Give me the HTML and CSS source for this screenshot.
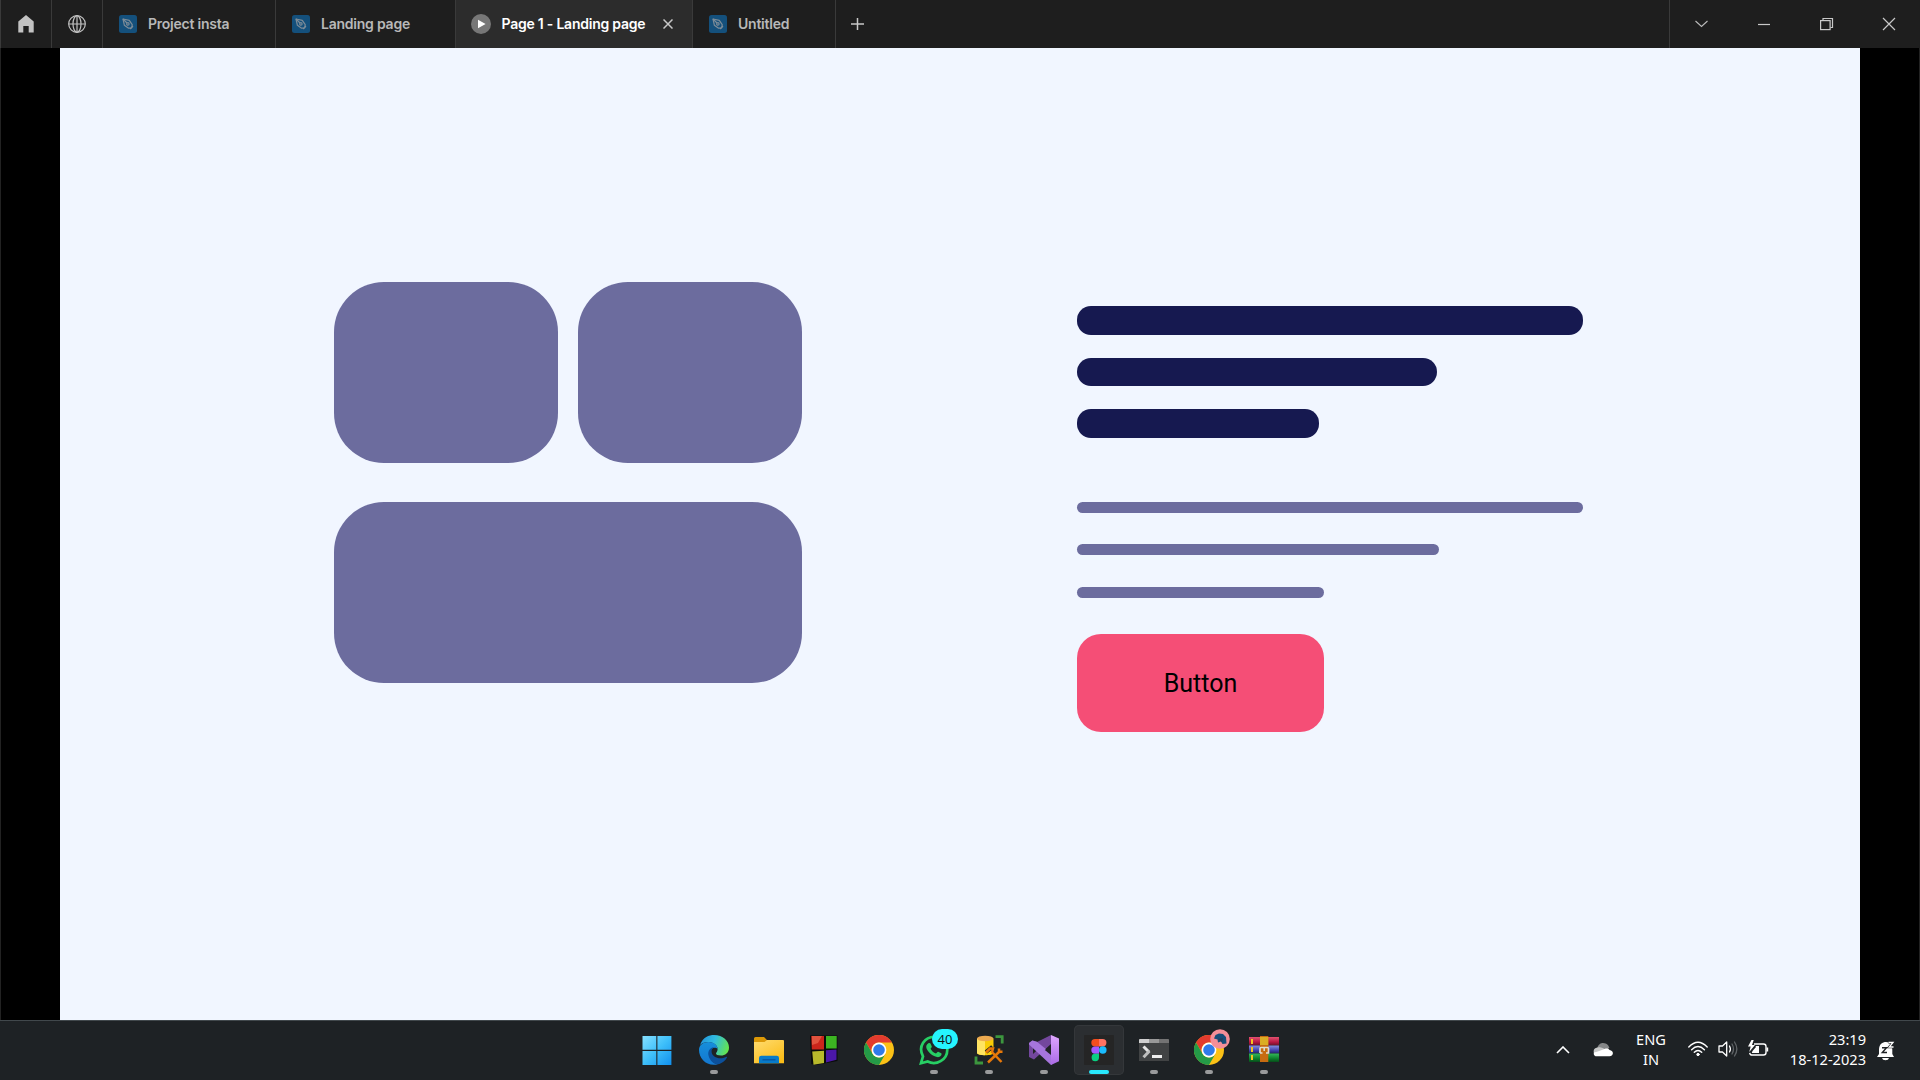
FILE: index.html
```html
<!DOCTYPE html>
<html lang="en">
<head>
<meta charset="utf-8">
<title>Page 1 - Landing page</title>
<link rel="stylesheet" href="styles.css">
</head>
<body>
<svg class="defs" width="0" height="0" aria-hidden="true">
  <defs>
    <symbol id="pen" viewBox="0 0 18 18">
      <rect width="18" height="18" rx="2.5" fill="#14507c"/>
      <g fill="none" stroke="#7d8c98" stroke-width="1.2" stroke-linejoin="round">
        <path d="M4 4L10.3 5.4L13.2 9.6L12.8 12.8L9.6 13.2L5.4 10.3Z"/>
        <path d="M4 4L8 8M11 14L14 11"/>
        <circle cx="8.9" cy="8.9" r="1.2"/>
      </g>
    </symbol>
    <symbol id="chrome" viewBox="0 0 30 30">
      <circle cx="15" cy="15" r="15" fill="#fbc116"/>
      <path d="M2 7.5A15 15 0 0 1 28 7.5H15A7.5 7.5 0 0 0 8.5 18.8Z" fill="#e33b2e"/>
      <path d="M2 7.5A15 15 0 0 0 15 30L21.5 18.7A7.5 7.5 0 0 1 8.5 18.7Z" fill="#249a47"/>
      <circle cx="15" cy="15" r="7.4" fill="#fff"/>
      <circle cx="15" cy="15" r="5.8" fill="#2f7bea"/>
    </symbol>
  </defs>
</svg>

<header class="titlebar">
  <div class="tool"><svg width="16" height="18" viewBox="0 0 16 18"><path d="M8 0L15.7 6.5V17.6H10.7V11H5.3V17.6H.3V6.5Z" fill="#c2c2c2"/></svg></div>
  <div class="tool"><svg width="18" height="18" viewBox="0 0 18 18" fill="none" stroke="#c2c2c2" stroke-width="1.2"><circle cx="9" cy="9" r="8.3"/><ellipse cx="9" cy="9" rx="4" ry="8.3"/><path d="M9 .7V17.3M.7 9H17.3"/></svg></div>
  <div class="tab tab-project"><svg width="18" height="18"><use href="#pen"/></svg><span>Project insta</span></div>
  <div class="tab tab-landing"><svg width="18" height="18"><use href="#pen"/></svg><span>Landing page</span></div>
  <div class="tab tab-active"><svg width="20" height="20" viewBox="0 0 20 20"><circle cx="10" cy="10" r="10" fill="#777"/><path d="M7 5.8L14.6 10L7 14.2Z" fill="#fff"/></svg><span>Page 1 - Landing page</span><svg class="close" width="10" height="10" viewBox="0 0 10 10"><path d="M.5 .5L9.5 9.5M9.5 .5L.5 9.5" stroke="#c8c8c8" stroke-width="1.5"/></svg></div>
  <div class="tab tab-untitled"><svg width="18" height="18"><use href="#pen"/></svg><span>Untitled</span></div>
  <div class="add"><svg width="13" height="12" viewBox="0 0 13 12"><path d="M0 6H13M6.5 0V12" stroke="#c8c8c8" stroke-width="1.5"/></svg></div>
  <div class="controls">
    <svg width="63" height="48" viewBox="0 0 63 48"><path d="M25.5 21L31.5 26.5L37.5 21" fill="none" stroke="#bbb" stroke-width="1.1"/></svg>
    <svg width="62" height="48" viewBox="0 0 62 48"><path d="M25 24.5H37" stroke="#c8c8c8" stroke-width="1.2"/></svg>
    <svg width="63" height="48" viewBox="0 0 63 48" fill="none" stroke="#c8c8c8" stroke-width="1.2"><path d="M28 20.5V18.5H37.5V27.5H35.5" /><rect x="25.6" y="20.6" width="9.5" height="9"/></svg>
    <svg width="62" height="48" viewBox="0 0 62 48"><path d="M25 18L37 30M37 18L25 30" stroke="#c8c8c8" stroke-width="1.2"/></svg>
  </div>
</header>

<main class="viewer">
  <div class="canvas">
    <section class="gallery">
      <div class="block"></div><div class="block"></div><div class="block wide"></div>
    </section>
    <section class="copy">
      <div class="heading"><div class="line long"></div><div class="line medium"></div><div class="line short"></div></div>
      <div class="body-text"><div class="line long"></div><div class="line medium"></div><div class="line short"></div></div>
      <button class="cta">Button</button>
    </section>
  </div>
</main>

<footer class="taskbar">
  <nav class="apps">
    <div class="app start"><svg width="30" height="30" viewBox="0 0 30 30"><defs><linearGradient id="win" x1="0" y1="0" x2="30" y2="30" gradientUnits="userSpaceOnUse"><stop stop-color="#8ae2ff"/><stop offset=".5" stop-color="#3fc0fa"/><stop offset="1" stop-color="#108fee"/></linearGradient></defs><path d="M.5 1H14.3V14.8H.5ZM15.4 1H29.4V14.8H15.4ZM.5 16H14.3V30H.5ZM15.4 16H29.4V30H15.4Z" fill="url(#win)"/></svg></div>
    <div class="app running"><svg width="30" height="30" viewBox="0 0 30 30"><defs><linearGradient id="edge1" x1="2" y1="5" x2="29" y2="15" gradientUnits="userSpaceOnUse"><stop stop-color="#2297dd"/><stop offset=".45" stop-color="#31bce0"/><stop offset="1" stop-color="#65e64c"/></linearGradient><linearGradient id="edge2" x1="0" y1="0" x2="0" y2="1"><stop stop-color="#168fdb"/><stop offset="1" stop-color="#1477cf"/></linearGradient></defs><path d="M1 10C4 2 10 0 15 0C24 0 30 6 30 12.5C30 18 26 20.5 22 20.5C18.5 20.5 17 19.5 17 18.5C17 17.5 18.6 17 18.6 14C18.6 10 14 7 9.5 7C6 7 3 8 1 10Z" fill="url(#edge1)"/><path d="M0 15C0 10 4 7 9.5 7C15 7 18.6 10.5 18.6 14C17 12 11.5 12 10.5 18C9.7 24 15 29 19 29.3C8 32 0 24 0 15Z" fill="url(#edge2)"/><path d="M15 12.2C10 12.7 8.8 17 9.4 20C10.7 26.5 16 29.5 19 29.3C23 28.5 26.5 25.5 28 22.5C28.3 21.8 27.5 21.6 27 22C20 25.5 13 21.5 12.6 17C12.4 14.5 13.5 13 15 12.2Z" fill="#0c509b"/></svg></div>
    <div class="app"><svg width="30" height="30" viewBox="0 0 30 30"><defs><linearGradient id="fold" x1="0" y1="0" x2=".7" y2="1"><stop stop-color="#ffdc70"/><stop offset="1" stop-color="#fbbd19"/></linearGradient></defs><path d="M0 3.5Q0 2 1.5 2H10L13 5H29V12H0Z" fill="#dc9907"/><path d="M0 7H10.5L13 5H29Q30 5 30 6V28.3H0Z" fill="url(#fold)"/><path d="M5 28.3V23Q5 20.7 7.3 20.7H22.7Q25 20.7 25 23V28.3Z" fill="#087bc9"/><path d="M8.5 24.8H21.5" stroke="#0750a0" stroke-width="1.2"/></svg></div>
    <div class="app"><svg width="30" height="30" viewBox="0 0 30 30"><path d="M1 .5H28.5V26L7 30L2.3 29Z" fill="#090b0b"/><path d="M2.2 1H15V14.5H2.8Z" fill="#cc251b"/><path d="M3 1H13L9 8L3 10Z" fill="#ec6b52" opacity=".65"/><path d="M17 1H27.7V13.5H17Z" fill="#3cb522"/><path d="M3.2 16.5L15 15.7V28L4.5 29.7Z" fill="#b8b92b"/><path d="M17 15.3L27.5 14.5V24.8L17 27.5Z" fill="#4b17a9"/></svg></div>
    <div class="app"><svg width="30" height="30"><use href="#chrome"/></svg></div>
    <div class="app running"><svg width="30" height="30" viewBox="0 0 30 30"><path d="M2 28.2L4 21.4C-1.5 11 6 1.8 15.3 1.8C23 1.8 28.3 8 28.3 14.7C28.3 25 17 31 8.7 26.5Z" fill="#202326" stroke="#27cf64" stroke-width="2.7"/><path d="M8.2 9.2C9.7 7.5 11.2 7.7 11.6 8.7L12.8 11.5C13 12.3 11.8 13.2 11.6 13.7C12.7 16 14.5 17.7 17 18.6C17.8 18 18.5 16.5 19.2 16.8L22.3 18.3C23.2 19 22.1 21.6 20 22.1C15 23 7.1 16 7.2 11.8Q7.3 10 8.2 9.2Z" fill="#27cf64"/></svg><span class="badge">40</span></div>
    <div class="app running"><svg width="30" height="30" viewBox="0 0 30 30"><path d="M21.5 1.7H28.2V8.5M2 21.5V28H9" fill="none" stroke="#3c963e" stroke-width="2.8"/><path d="M3 3.5V18C3 21 19.5 21 19.5 18V3.5Z" fill="#f9cc06"/><path d="M3 3.5V18Q4.2 20 11 20.2V6Z" fill="#ffe463"/><ellipse cx="11.2" cy="3.5" rx="8.2" ry="2.8" fill="#ecaa50"/><g fill="none" stroke="#252529" stroke-width="4"><path d="M12 17L17 13L19 15L28 26M28 14L15 27"/></g><g fill="none" stroke="#e77909" stroke-width="2.5"><path d="M12 17.5L16 13.5H19L18 17L27.5 27M25 13.5V16.8H28.5M25 17L14 27.5"/></g></svg></div>
    <div class="app running"><svg width="30" height="30" viewBox="0 0 30 30"><defs><linearGradient id="vs" x1="0" y1="0" x2="0" y2="1"><stop stop-color="#e0a7ff"/><stop offset="1" stop-color="#aa6ae5"/></linearGradient></defs><path d="M0 8L3.4 5.4L8 7L22 0V9L5 24.5L0 22Z" fill="#73479d"/><path d="M4 11.3V19L8.2 15Z" fill="#202326"/><path d="M0 8L3.4 5.4L8 6.8L29 24L22 30L0 9.5Z" fill="#a675dc"/><path d="M22 0L30 3.5V26.2L22 30Z" fill="url(#vs)"/><path d="M22 10L15.8 15L22 20Z" fill="#202326"/></svg></div>
    <div class="app running selected"><svg width="30" height="30" viewBox="0 0 30 30"><rect width="30" height="30" rx="1" fill="#252525"/><path d="M15 4H11a3.7 3.7 0 0 0 0 7.4h4Z" fill="#f24e1e"/><path d="M15 4h3.7a3.7 3.7 0 0 1 0 7.4H15Z" fill="#ff7262"/><path d="M15 11.4H11a3.7 3.7 0 0 0 0 7.4h4Z" fill="#a259ff"/><circle cx="18.8" cy="15.1" r="3.75" fill="#1abcfe"/><path d="M15 18.8H11a3.7 3.7 0 1 0 4 3.7Z" fill="#0acf83"/></svg></div>
    <div class="app running"><svg width="30" height="30" viewBox="0 0 30 30"><path d="M0 5Q0 4 1 4H29Q30 4 30 5V26H0Z" fill="#414344"/><path d="M0 8V5Q0 4 1 4H10V8Z" fill="#cfcfcf"/><path d="M10 4H20V8H10Z" fill="#999"/><path d="M20 4H29Q30 4 30 5V8H20Z" fill="#737373"/><path d="M4.5 11.5L10 17" stroke="#e4e4e4" stroke-width="3"/><path d="M10.5 16L4.5 22.3" stroke="#bfbfbf" stroke-width="3"/><path d="M13 21.5H23" stroke="#eee" stroke-width="3"/></svg></div>
    <div class="app running"><svg width="30" height="30"><use href="#chrome"/></svg><span class="avatar"><svg width="20" height="20" viewBox="0 0 20 20"><circle cx="10" cy="10" r="9.8" fill="#f48e98"/><path d="M4 9.5L5.5 6L9 4.5L13 5L16 8L16.5 14.5L12.5 15L11 12.5L8 13.5L7.5 10.5Z" fill="#164d79"/><path d="M8 10L13 9L12 13Z" fill="#263b5b"/></svg></span></div>
    <div class="app running"><svg width="30" height="30" viewBox="0 0 30 30"><defs><linearGradient id="r" x1="0" y1="0" x2="0" y2="1"><stop stop-color="#e35270"/><stop offset=".6" stop-color="#b71741"/><stop offset="1" stop-color="#671328"/></linearGradient><linearGradient id="b" x1="0" y1="0" x2="0" y2="1"><stop stop-color="#8790e0"/><stop offset=".6" stop-color="#4142ae"/><stop offset="1" stop-color="#232363"/></linearGradient><linearGradient id="g" x1="0" y1="0" x2="0" y2="1"><stop stop-color="#33b75a"/><stop offset=".6" stop-color="#0c802c"/><stop offset="1" stop-color="#074c1a"/></linearGradient></defs><rect y="2" width="30" height="8.5" fill="url(#r)"/><rect y="10.5" width="30" height="8" fill="url(#b)"/><rect y="18.5" width="30" height="8.5" fill="url(#g)"/><path d="M3 4V9M3 12V17M3 20V25" stroke="#f3c421" stroke-width="2"/><path d="M11 1H19.3V27H11Z" fill="#c76b11"/><path d="M11 2H19.3V10H11Z" fill="#dbad24"/><path d="M11 18V13.5Q11 12.5 12 12.5H18.5Q19.5 12.5 19.5 13.5V18H17" fill="none" stroke="#e1ddcd" stroke-width="1.7"/><path d="M11 18H13.5M15.2 12V16" stroke="#e1ddcd" stroke-width="1.5"/></svg></div>
  </nav>
  <div class="tray">
    <svg class="chevron" width="14" height="8" viewBox="0 0 14 8"><path d="M1 7L7 1L13 7" fill="none" stroke="#fff" stroke-width="1.6"/></svg>
    <svg class="cloud" width="20" height="14" viewBox="0 0 20 14"><path d="M4 6C5 1 8 0 10 0C14 0 16 3 16.3 5L10 9Z" fill="#858788"/><path d="M3.5 12A3.7 3.7 0 0 1 3.5 4.8C6 3.8 9 4 17 9Z" fill="#c7c8c8"/><path d="M4 13.3C1 13.3 .3 11 1 9.5C5 9 9 7 12 5.8C14 5 16 5.8 16.6 7.1C21 7.5 21 13.3 16.5 13.3Z" fill="#fff"/></svg>
    <div class="language"><span>ENG</span><span>IN</span></div>
    <svg class="wifi" width="20" height="16" viewBox="0 0 20 16" fill="none" stroke="#fff" stroke-width="1.4" stroke-linecap="round"><path d="M.8 6Q10-3.5 19.2 6M3.6 8.7Q10 2.3 16.4 8.7M6.3 11.3Q10 7.7 13.7 11.3"/><circle cx="10" cy="13.5" r="1.2" fill="#fff" stroke-width="1"/></svg>
    <svg class="volume" width="20" height="18" viewBox="0 0 20 18" fill="none" stroke="#fff" stroke-width="1.3" stroke-linecap="round" stroke-linejoin="round"><path d="M1 6H4.5L8.7 2V16L4.5 12H1Z"/><path d="M11.5 6Q13.3 9 11.5 12"/><path d="M14 4Q17 9 14 14M16.5 2Q21.2 9 16.5 16" stroke="#606467"/></svg>
    <svg class="battery" width="21" height="18" viewBox="0 0 21 18"><path d="M6 4H15.5Q18 4 18 6.5V12.5Q18 15 15.5 15H4Q2 15 1.7 12.8" fill="none" stroke="#fff" stroke-width="1.4"/><path d="M18.5 7.5H20.2V11.5H18.5ZM7.5 6H11V13H3.8L4.5 11L8 7Z" fill="#fff"/><path d="M3.5 0L0 6.5H2.7L1.2 12L7 5H4L5.7 0Z" fill="#fff"/></svg>
    <div class="clock"><span>23:19</span><span>18-12-2023</span></div>
    <svg class="bell" width="18" height="20" viewBox="0 0 18 20"><path d="M2 9C2 3 5.5 1 9 1C13 1 15.3 4 15.3 9V13L17 16H0L2 13Z" fill="#fff"/><path d="M5 17H12Q11.5 19.3 8.5 19.3Q5.5 19.3 5 17Z" fill="#fff"/><path d="M5 6.8H9.5L5.3 11.5H10" fill="none" stroke="#202326" stroke-width="1.4"/><path d="M11.5 1.5H16L12.3 6H16.5" fill="none" stroke="#202326" stroke-width="2.6"/><path d="M11.5 1.5H16L12.3 6H16.5" fill="none" stroke="#fff" stroke-width="1.3"/></svg>
  </div>
</footer>
</body>
</html>
```
FILE: styles.css
```css
* { box-sizing: border-box; }
body {
  margin: 0;
  width: 1920px;
  height: 1080px;
  overflow: hidden;
  display: flex;
  flex-direction: column;
  background: #000;
  font-family: Inter, "Liberation Sans", sans-serif;
}
svg { display: block; flex: none; }
.defs { position: absolute; }

.titlebar {
  height: 48px;
  flex: none;
  display: flex;
  background: #1e1e1e;
  border-left: 1px solid #3a3a3a;
  color: #b8b8b8;
  font-size: 14px;
  font-weight: 600;
  letter-spacing: -0.23px;
}
.tool, .tab, .add { display: flex; align-items: center; flex: none; }
.tool { width: 51px; justify-content: center; border-right: 1px solid #3a3a3a; }
.tab { padding-left: 16px; gap: 11px; border-right: 1px solid #3a3a3a; white-space: nowrap; }
.tab span { padding-bottom: 1px; }
.tab-project { width: 173px; }
.tab-landing { width: 180px; }
.tab-active { width: 237px; padding-left: 15px; gap: 10.5px; background: #2c2c2c; color: #fff; }
.close { margin-left: auto; margin-right: 19px; }
.tab-untitled { width: 143px; }
.add { padding-left: 15px; }
.controls { margin-left: auto; display: flex; border-left: 1px solid #3a3a3a; }

.viewer {
  height: 972px;
  flex: none;
  padding: 0 59px;
  border-left: 1px solid #222;
  border-right: 1px solid #222;
}
.canvas { height: 972px; display: flex; background: #f1f6ff; }
.gallery {
  margin: 234px 0 0 274.2px;
  display: grid;
  grid-template: 181px 181px / 223.8px 223.8px;
  gap: 39px 20.1px;
  align-self: flex-start;
}
.block { background: #6c6c9e; border-radius: 50px; }
.wide { grid-column: span 2; }
.copy { margin: 258.4px 0 0 275.1px; width: 506.2px; }
.heading, .body-text { display: flex; flex-direction: column; }
.heading { gap: 22.5px; }
.heading .line { height: 28.8px; border-radius: 14px; background: #161950; }
.heading .medium { width: 360px; }
.heading .short { width: 242px; }
.body-text { margin-top: 63.8px; gap: 31.1px; }
.body-text .line { height: 11.4px; border-radius: 5.7px; background: #6c6c9e; }
.body-text .medium { width: 362px; }
.body-text .short { width: 247px; }
.cta {
  display: block;
  margin: 36.2px 0 0;
  padding: 2px 0 0;
  width: 247px;
  height: 97.4px;
  border: 0;
  border-radius: 24px;
  background: #f54e76;
  color: #000;
  font: 25px Roboto, sans-serif;
}

.taskbar {
  height: 60px;
  flex: none;
  display: flex;
  justify-content: space-between;
  background: #1e2225;
  border-top: 1px solid #41484c;
  color: #fff;
}
.apps { display: flex; gap: 5px; padding: 4px 0 0 632px; }
.app {
  position: relative;
  width: 50px;
  height: 50px;
  padding-top: 10px;
  display: flex;
  justify-content: center;
  border-radius: 5px;
}
.start { margin-right: 2px; }
.selected { background: #2b2e31; box-shadow: inset 0 0 0 1px #34373a; }
.running::after {
  content: "";
  position: absolute;
  left: 21px;
  top: 45px;
  width: 8px;
  height: 4px;
  border-radius: 2px;
  background: #9a9b9c;
}
.selected::after { left: 15px; width: 20px; background: #28e8fc; }
.badge {
  position: absolute;
  left: 23px;
  top: 4px;
  width: 26px;
  height: 20px;
  border-radius: 10px;
  background: #25f4ff;
  color: #111;
  font: 13px/20px "Open Sans", sans-serif;
  text-align: center;
}
.avatar { position: absolute; left: 26px; top: 4px; }

.tray {
  display: flex;
  align-items: flex-start;
  padding-right: 25px;
  font-family: "Noto Sans", sans-serif;
  font-size: 14.6px;
  line-height: 20px;
}
.language, .clock { display: flex; flex-direction: column; flex: none; }
.chevron { margin: 25px 23px 0 0; }
.cloud { margin-top: 22px; }
.language { width: 50px; margin: 8px 12px 0 13px; align-items: center; }
.wifi { margin: 20px 10px 0 0; }
.volume { margin: 19px 10px 0 0; }
.battery { margin-top: 19px; }
.clock { width: 97px; margin-top: 8px; align-items: flex-end; }
.bell { margin: 20px 0 0 11px; }
```
